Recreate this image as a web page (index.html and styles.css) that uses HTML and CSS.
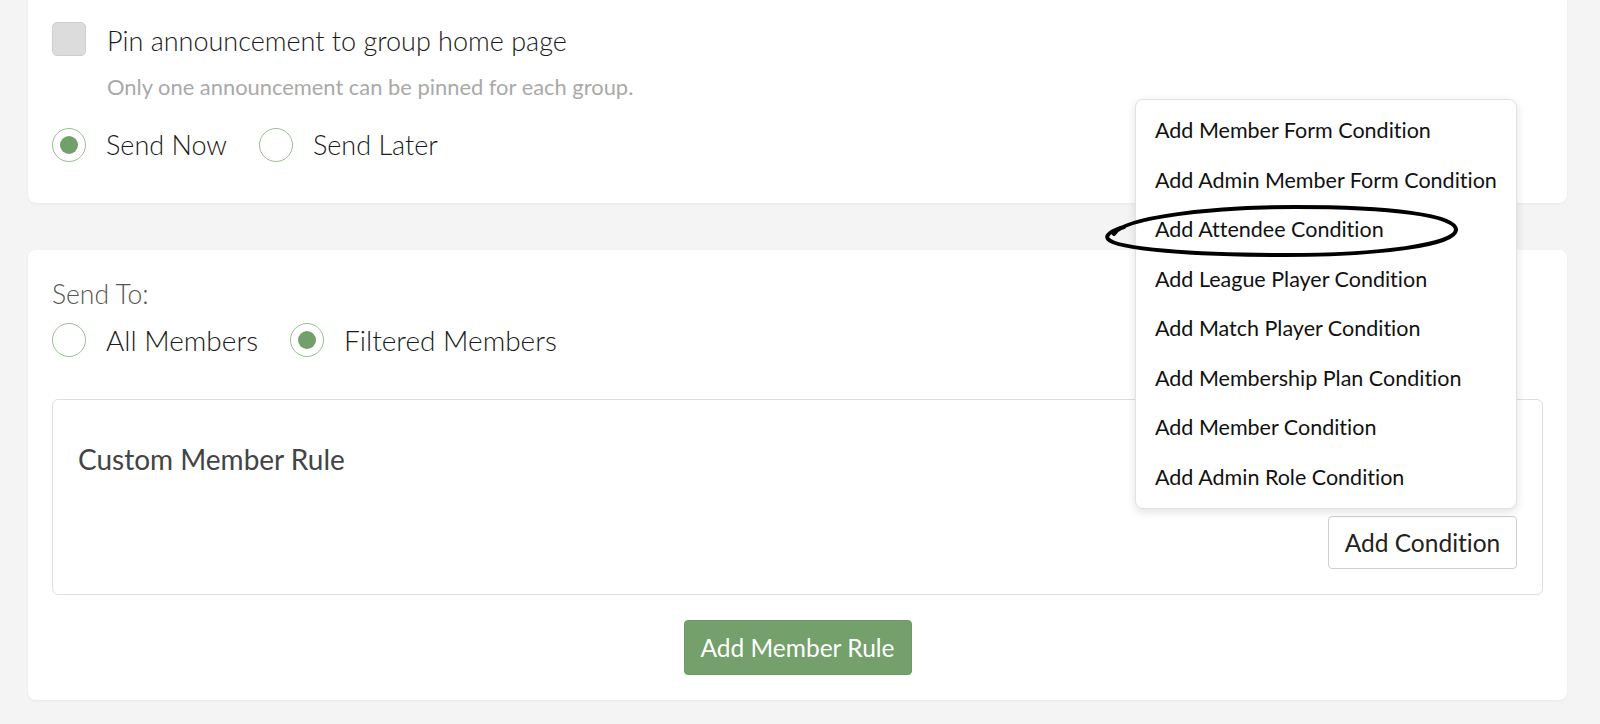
FILE: index.html
```html
<!DOCTYPE html>
<html lang="en">
<head>
<meta charset="utf-8">
<title>Announcement</title>
<link rel="stylesheet" href="styles.css">
</head>
<body>
<div class="page">
  <section class="card card-top">
    <div class="check-row">
      <span class="checkbox"></span>
      <span class="label">Pin announcement to group home page</span>
    </div>
    <p class="help">Only one announcement can be pinned for each group.</p>
    <div class="radio-row">
      <div class="radio-opt"><span class="radio checked"></span><span class="label">Send Now</span></div>
      <div class="radio-opt"><span class="radio"></span><span class="label">Send Later</span></div>
    </div>
  </section>

  <section class="card card-send">
    <div class="send-to">Send To:</div>
    <div class="radio-row">
      <div class="radio-opt"><span class="radio"></span><span class="label">All Members</span></div>
      <div class="radio-opt"><span class="radio checked"></span><span class="label">Filtered Members</span></div>
    </div>
    <div class="rule-box">
      <h3 class="rule-title">Custom Member Rule</h3>
      <div class="rule-actions">
        <button class="btn-outline">Add Condition</button>
      </div>
    </div>
    <div class="center-row">
      <button class="btn-green">Add Member Rule</button>
    </div>
  </section>

  <ul class="menu">
    <li>Add Member Form Condition</li>
    <li>Add Admin Member Form Condition</li>
    <li>Add Attendee Condition</li>
    <li>Add League Player Condition</li>
    <li>Add Match Player Condition</li>
    <li>Add Membership Plan Condition</li>
    <li>Add Member Condition</li>
    <li>Add Admin Role Condition</li>
  </ul>

  <svg class="mark" width="366" height="60" viewBox="0 0 366 60" aria-hidden="true">
    <path d="M12 32 C 22 15, 112 5, 193 5 C 287 5, 355 13, 354 28 C 353 43, 277 53, 183 53 C 92 53, 14 47, 6 37 C 3 33, 9 29, 22 25"
          fill="none" stroke="#000" stroke-width="4" stroke-linecap="round"/>
  </svg>
</div>
</body>
</html>
```

FILE: styles.css
```css
* { box-sizing: border-box; }

html, body {
  margin: 0;
  padding: 0;
  background: #f4f4f4;
  font-family: Lato, "Open Sans", Arial, sans-serif;
  font-variant-ligatures: none;
  color: #1e1e1e;
}

.page {
  position: relative;
  width: 1600px;
  height: 724px;
  padding-left: 28px;
  overflow: hidden;
}

.card {
  width: 1539px;
  background: #fff;
  border-radius: 8px;
  box-shadow: 0 1px 3px rgba(0, 0, 0, 0.05);
  padding-left: 24px;
  padding-right: 24px;
}

.card-top {
  border-top-left-radius: 0;
  border-top-right-radius: 0;
  padding-top: 22px;
  padding-bottom: 42px;
  height: 203px;
}

.check-row {
  display: flex;
  align-items: center;
  gap: 21px;
  height: 34px;
}

.checkbox {
  width: 34px;
  height: 34px;
  border-radius: 5px;
  background: #dcdcdc;
  border: 1px solid #cfcfcf;
  flex: none;
}

.label {
  font-size: 27px;
  font-weight: 300;
  color: #1a1a1a;
  line-height: 30px;
}

.check-row .label {
  position: relative;
  top: 2px;
}

.help {
  margin: 18px 0 0 55px;
  font-size: 21.9px;
  line-height: 26px;
  color: #a9a9a9;
}

.radio-row {
  display: flex;
  align-items: center;
  gap: 32px;
  height: 34px;
}

.card-top .radio-row {
  margin-top: 28px;
}

.radio-opt {
  display: flex;
  align-items: center;
  gap: 20px;
}

.radio {
  width: 34px;
  height: 34px;
  border-radius: 50%;
  border: 1px solid #93c28c;
  background: #fff;
  display: flex;
  align-items: center;
  justify-content: center;
  flex: none;
}

.radio.checked::after {
  content: "";
  width: 18px;
  height: 18px;
  border-radius: 50%;
  background: #72a06a;
}

.card-send {
  margin-top: 47px;
  padding-top: 30px;
  padding-bottom: 25px;
}

.send-to {
  font-size: 26.5px;
  font-weight: 300;
  line-height: 28px;
  color: #555;
}

.card-send .radio-row {
  margin-top: 15px;
}

.card-send .label {
  font-size: 28px;
}

.rule-box {
  margin-top: 42px;
  border: 1px solid #dedede;
  border-radius: 6px;
  padding: 44px 25px 25px 25px;
}

.rule-title {
  margin: 0;
  font-size: 28px;
  font-weight: 400;
  line-height: 30px;
  color: #444;
}

.rule-actions {
  display: flex;
  justify-content: flex-end;
  margin-top: 42px;
}

.btn-outline {
  font-family: Lato, Arial, sans-serif;
  font-variant-ligatures: none;
  font-size: 24.5px;
  color: #222;
  background: #fff;
  border: 1px solid #cfcfcf;
  border-radius: 4px;
  width: 189px;
  height: 53px;
  padding: 0;
}

.center-row {
  display: flex;
  justify-content: center;
  margin-top: 25px;
}

.btn-green {
  font-family: Lato, Arial, sans-serif;
  font-variant-ligatures: none;
  font-size: 24.5px;
  color: #fff;
  background: #73a06b;
  border: 1px solid #6c9964;
  border-radius: 4px;
  width: 228px;
  height: 55px;
  padding: 0;
}

.menu {
  position: absolute;
  left: 1135px;
  top: 99px;
  width: 382px;
  margin: 0;
  padding: 6px 0;
  list-style: none;
  background: #fff;
  border: 1px solid #e2e2e2;
  border-radius: 8px;
  box-shadow: 0 3px 10px rgba(0, 0, 0, 0.12);
}

.menu li {
  height: 49.5px;
  line-height: 49.5px;
  padding-left: 19px;
  font-size: 21.5px;
  color: #111;
  white-space: nowrap;
}

.mark {
  position: absolute;
  left: 1102px;
  top: 202px;
}
```
